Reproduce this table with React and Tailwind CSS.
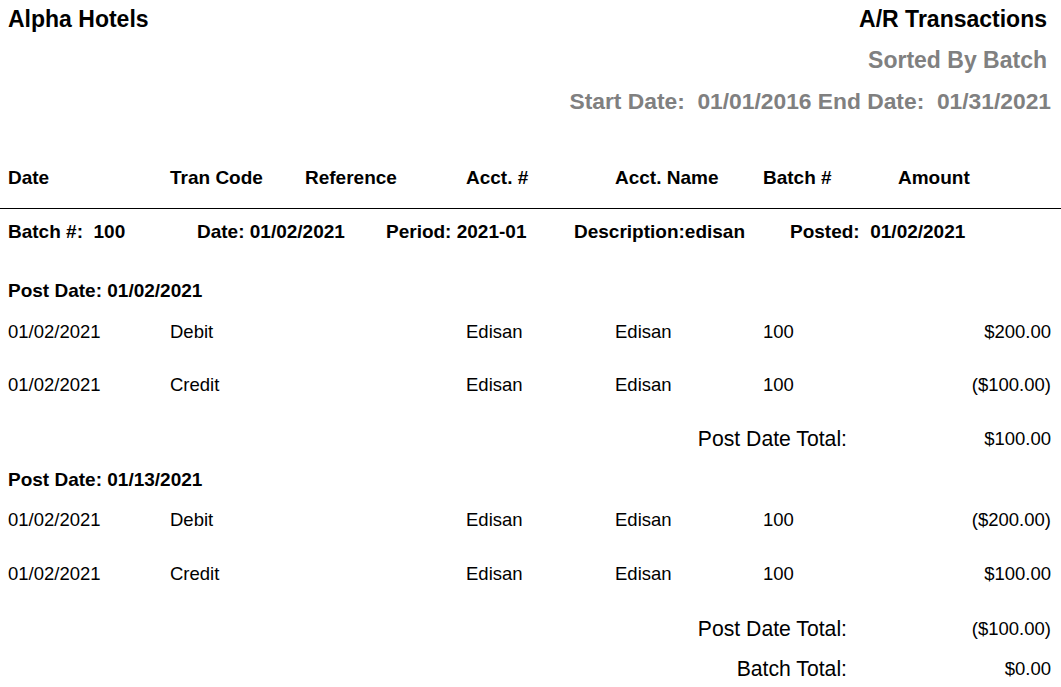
const cols = "grid grid-cols-[162px_135px_161px_149px_148px_1fr] items-center";

const groups = [
  {
    postDate: "01/02/2021",
    rows: [
      { date: "01/02/2021", code: "Debit", acct: "Edisan", name: "Edisan", batch: "100", amount: "$200.00" },
      { date: "01/02/2021", code: "Credit", acct: "Edisan", name: "Edisan", batch: "100", amount: "($100.00)" },
    ],
    total: "$100.00",
  },
  {
    postDate: "01/13/2021",
    rows: [
      { date: "01/02/2021", code: "Debit", acct: "Edisan", name: "Edisan", batch: "100", amount: "($200.00)" },
      { date: "01/02/2021", code: "Credit", acct: "Edisan", name: "Edisan", batch: "100", amount: "$100.00" },
    ],
    total: "($100.00)",
  },
];

function Row({ r, className }) {
  return (
    <div className={`${cols} pl-2 pr-[10px] ${className}`}>
      <span>{r.date}</span>
      <span>{r.code}</span>
      <span></span>
      <span>{r.acct}</span>
      <span>{r.name}</span>
      <div className="flex justify-between">
        <span>{r.batch}</span>
        <span>{r.amount}</span>
      </div>
    </div>
  );
}

function TotalRow({ label, value, className }) {
  return (
    <div className={`flex items-center pr-[10px] ${className}`}>
      <span className="w-[847px] text-right text-[21.2px]">{label}</span>
      <span className="flex-1 text-right">{value}</span>
    </div>
  );
}

export default function App() {
  return (
    <div className="w-[1061px] h-[687px] overflow-hidden bg-white text-black font-['Liberation_Sans',Arial,sans-serif] text-[18.5px]">
      <div className="flex flex-col">
        <div className="flex justify-between items-center h-[38px] pl-2 pr-[14px] text-[23px] font-bold">
          <span>Alpha Hotels</span>
          <span>A/R Transactions</span>
        </div>
        <div className="flex justify-end items-center h-[44px] pr-[14px] text-[23px] font-bold text-[#808080]">
          Sorted By Batch
        </div>
        <div className="flex justify-end items-center h-[38px] pr-[10px] text-[22.8px] font-bold text-[#808080] whitespace-pre">
          {"Start Date:  01/01/2016 End Date:  01/31/2021"}
        </div>
      </div>

      <div className={`${cols} mt-[40px] h-[36px] pl-2 font-bold text-[19px]`}>
        <span>Date</span>
        <span>Tran Code</span>
        <span>Reference</span>
        <span>Acct. #</span>
        <span>Acct. Name</span>
        <div className="flex">
          <span className="w-[135px]">Batch #</span>
          <span>Amount</span>
        </div>
      </div>

      <div className="mt-[12px] border-t border-black"></div>

      <div className="flex items-center h-[46px] pl-2 font-bold text-[19px] whitespace-pre">
        <span className="w-[189px]">{"Batch #:  100"}</span>
        <span className="w-[189px]">Date: 01/02/2021</span>
        <span className="w-[188px]">Period: 2021-01</span>
        <span className="w-[216px]">Description:edisan</span>
        <span>{"Posted:  01/02/2021"}</span>
      </div>

      {groups.map((g, i) => (
        <div key={i}>
          <div className={`flex items-center pl-2 font-bold text-[19px] ${i === 0 ? "mt-[16px] h-[40px]" : "h-[38px]"}`}>
            Post Date: {g.postDate}
          </div>
          <Row r={g.rows[0]} className="h-[42px]" />
          <Row r={g.rows[1]} className={i === 0 ? "h-[64px]" : "h-[66px]"} />
          <TotalRow label="Post Date Total:" value={g.total} className="h-[44px]" />
        </div>
      ))}

      <TotalRow label="Batch Total:" value="$0.00" className="h-[36px]" />
    </div>
  );
}
